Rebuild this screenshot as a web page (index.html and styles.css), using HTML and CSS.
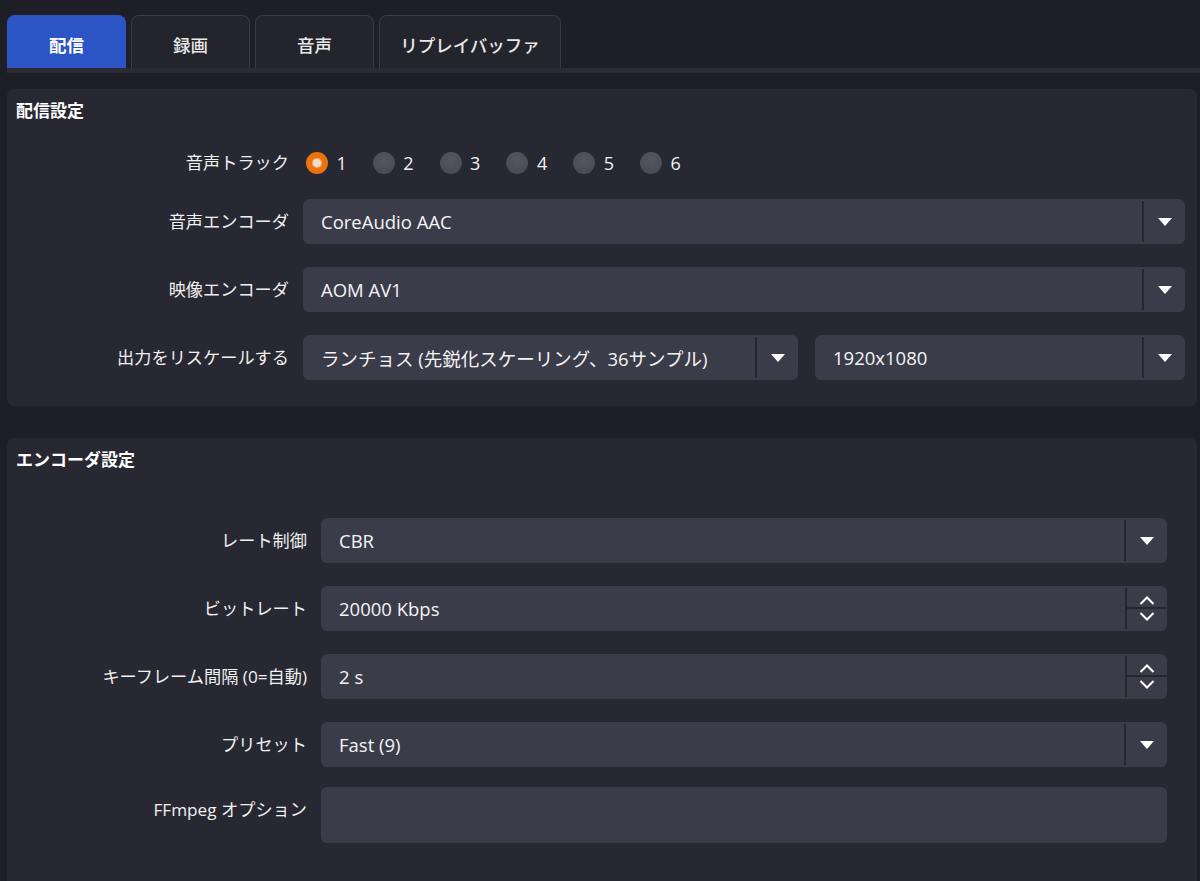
FILE: index.html
```html
<!DOCTYPE html>
<html lang="ja">
<head>
<meta charset="utf-8">
<title>出力設定</title>
<link rel="stylesheet" href="styles.css">
</head>
<body>
<div class="tabs">
  <div class="tab active">配信</div>
  <div class="tab">録画</div>
  <div class="tab">音声</div>
  <div class="tab wide">リプレイバッファ</div>
</div>
<div class="tab-line"></div>

<section class="panel panel-stream">
  <h2 class="panel-title">配信設定</h2>
  <div class="form form-stream">
    <div class="label">音声トラック</div>
    <div class="radios">
      <span class="radio-item"><span class="radio checked"></span>1</span>
      <span class="radio-item"><span class="radio"></span>2</span>
      <span class="radio-item"><span class="radio"></span>3</span>
      <span class="radio-item"><span class="radio"></span>4</span>
      <span class="radio-item"><span class="radio"></span>5</span>
      <span class="radio-item"><span class="radio"></span>6</span>
    </div>

    <div class="label">音声エンコーダ</div>
    <div class="select"><span class="value">CoreAudio AAC</span><span class="arrow"><svg width="14" height="8" viewBox="0 0 14 8"><path d="M0 0H14L7 8Z" fill="#fff"/></svg></span></div>

    <div class="label">映像エンコーダ</div>
    <div class="select"><span class="value">AOM AV1</span><span class="arrow"><svg width="14" height="8" viewBox="0 0 14 8"><path d="M0 0H14L7 8Z" fill="#fff"/></svg></span></div>

    <div class="label">出力をリスケールする</div>
    <div class="pair">
      <div class="select narrow"><span class="value">ランチョス (先鋭化スケーリング、36サンプル)</span><span class="arrow"><svg width="14" height="8" viewBox="0 0 14 8"><path d="M0 0H14L7 8Z" fill="#fff"/></svg></span></div>
      <div class="select"><span class="value">1920x1080</span><span class="arrow"><svg width="14" height="8" viewBox="0 0 14 8"><path d="M0 0H14L7 8Z" fill="#fff"/></svg></span></div>
    </div>
  </div>
</section>

<section class="panel panel-encoder">
  <h2 class="panel-title">エンコーダ設定</h2>
  <div class="form form-encoder">
    <div class="label">レート制御</div>
    <div class="select"><span class="value">CBR</span><span class="arrow"><svg width="14" height="8" viewBox="0 0 14 8"><path d="M0 0H14L7 8Z" fill="#fff"/></svg></span></div>

    <div class="label">ビットレート</div>
    <div class="spin"><span class="value">20000 Kbps</span><span class="steps"><span class="step"><svg width="16" height="9" viewBox="0 0 16 9"><path d="M1.5 8L8 1.5L14.5 8" fill="none" stroke="#fff" stroke-width="2"/></svg></span><span class="step"><svg width="16" height="9" viewBox="0 0 16 9"><path d="M1.5 1L8 7.5L14.5 1" fill="none" stroke="#fff" stroke-width="2"/></svg></span></span></div>

    <div class="label">キーフレーム間隔 (0=自動)</div>
    <div class="spin"><span class="value">2 s</span><span class="steps"><span class="step"><svg width="16" height="9" viewBox="0 0 16 9"><path d="M1.5 8L8 1.5L14.5 8" fill="none" stroke="#fff" stroke-width="2"/></svg></span><span class="step"><svg width="16" height="9" viewBox="0 0 16 9"><path d="M1.5 1L8 7.5L14.5 1" fill="none" stroke="#fff" stroke-width="2"/></svg></span></span></div>

    <div class="label">プリセット</div>
    <div class="select"><span class="value">Fast (9)</span><span class="arrow"><svg width="14" height="8" viewBox="0 0 14 8"><path d="M0 0H14L7 8Z" fill="#fff"/></svg></span></div>

    <div class="label top shift">FFmpeg オプション</div>
    <div class="textbox shift"></div>
  </div>
</section>
</body>
</html>
```

FILE: styles.css
```css
* { box-sizing: border-box; }

html, body {
  margin: 0;
  padding: 0;
  height: 100%;
}

body {
  background: #1e1f26;
  color: #f2f2f2;
  font-family: "Open Sans", "Noto Sans CJK JP", sans-serif;
  font-size: 17px;
  overflow: hidden;
}

.tabs {
  display: flex;
  gap: 5px;
  padding: 15px 0 0 7px;
}

.tab {
  width: 119px;
  height: 53px;
  display: flex;
  align-items: center;
  justify-content: center;
  padding-top: 4px;
  background: #23242c;
  border: 1px solid #393a44;
  border-bottom: none;
  border-radius: 8px 8px 0 0;
  color: #e8e8e8;
  font-family: "Noto Sans CJK JP", sans-serif;
  font-size: 17.5px;
  font-weight: 500;
}

.tab.wide { width: 182px; }

.tab.active {
  background: #2c54c4;
  border-color: #2c54c4;
  color: #ffffff;
  font-weight: 700;
}

.tab-line {
  height: 5px;
  margin-left: 7px;
  background: #2a2b33;
}

.panel {
  background: #272831;
  border-radius: 7px;
  margin: 0 3px 0 7px;
}

.panel-stream {
  margin-top: 16px;
  height: 317px;
  padding: 10px 12px 0 0;
}

.panel-encoder {
  margin-top: 32px;
  height: 460px;
  padding: 10px 30px 0 0;
  border-radius: 7px 7px 0 0;
}

.panel-title {
  margin: 0 0 0 9px;
  font-family: "Noto Sans CJK JP", sans-serif;
  font-size: 17px;
  font-weight: 700;
  line-height: 22px;
  color: #ffffff;
}

.form {
  display: grid;
  column-gap: 14px;
  row-gap: 23px;
  align-items: start;
}

.form-stream {
  grid-template-columns: 282px 1fr;
  margin-top: 29px;
  row-gap: 23px;
}

.form-encoder {
  grid-template-columns: 300px 1fr;
  margin-top: 48px;
}

.label {
  text-align: right;
  line-height: 45px;
  height: 45px;
  white-space: nowrap;
  color: #f0f0f0;
  font-size: 17.2px;
}

.form-stream > .label:first-child {
  line-height: 26px;
  height: 26px;
}

.radios {
  display: flex;
  align-items: center;
  height: 26px;
  gap: 26px;
  padding-left: 3px;
}

.radio-item {
  display: flex;
  align-items: center;
  gap: 8.5px;
  font-size: 18px;
}

.radio {
  width: 22px;
  height: 22px;
  border-radius: 50%;
  background: radial-gradient(circle at 50% 35%, #55565f 0%, #45464f 100%);
}

.radio.checked {
  background: #f3dcc8;
  border: 6px solid #e9740f;
  box-shadow: inset 0 0 0 1px #f0a060;
}

.select,
.spin,
.textbox {
  display: flex;
  align-items: stretch;
  height: 45px;
  background: #3b3c49;
  border-radius: 6px;
  overflow: hidden;
}

.value {
  flex: 1;
  display: flex;
  align-items: center;
  padding-left: 18px;
  font-size: 18.5px;
  color: #f4f4f4;
  white-space: nowrap;
}

.arrow {
  width: 43px;
  display: flex;
  align-items: center;
  justify-content: center;
  border-left: 2px solid #25262e;
  margin: 2px 0;
}

.pair {
  display: grid;
  grid-template-columns: 495px 1fr;
  gap: 17px;
}

.spin .steps {
  width: 42px;
  display: flex;
  flex-direction: column;
  border-left: 2px solid #25262e;
  margin: 2px 0;
}

.step {
  flex: 1;
  display: flex;
  align-items: center;
  justify-content: center;
}

.step:first-child {
  border-bottom: 2px solid #25262e;
  align-items: flex-end;
  padding-bottom: 2px;
}

.step:last-child {
  align-items: flex-start;
  padding-top: 3px;
}

.textbox {
  height: 56px;
}

.shift {
  margin-top: -3px;
}
```
